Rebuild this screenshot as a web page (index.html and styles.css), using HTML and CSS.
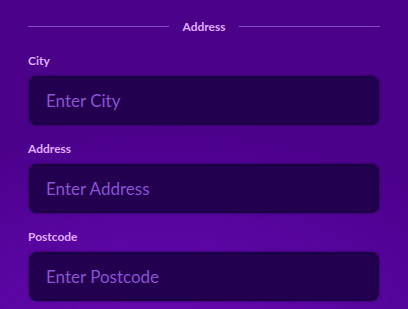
FILE: index.html
```html
<!DOCTYPE html>
<html>
<head>
<meta charset="utf-8">
<link rel="stylesheet" href="styles.css">
</head>
<body>
<div class="form">
  <div class="divider"><span class="line"></span><span class="divider-text">Address</span><span class="line"></span></div>
  <div class="field">
    <label class="label">City</label>
    <div class="input"><span class="placeholder">Enter City</span></div>
  </div>
  <div class="field">
    <label class="label">Address</label>
    <div class="input"><span class="placeholder">Enter Address</span></div>
  </div>
  <div class="field">
    <label class="label">Postcode</label>
    <div class="input"><span class="placeholder">Enter Postcode</span></div>
  </div>
</div>
</body>
</html>
```
FILE: styles.css
```css
html, body {
  margin: 0;
  padding: 0;
  height: 100%;
}
body {
  background: radial-gradient(ellipse 120% 90% at 40% 110%, #6a08b0 0%, #5805a0 40%, #4a0089 80%);
  background-color: #4a0089;
  font-family: Lato, "Open Sans", sans-serif;
  overflow: hidden;
}
.form {
  padding: 18px 28px 0 28px;
  display: flex;
  flex-direction: column;
}
.divider {
  display: flex;
  align-items: center;
  gap: 13px;
  height: 16px;
}
.line {
  flex: 1;
  height: 1px;
  background: #8048c4;
}
.divider-text {
  color: #e0adff;
  font-weight: 700;
  font-size: 12px;
}
.field {
  display: flex;
  flex-direction: column;
  margin-top: 20px;
}
.field + .field {
  margin-top: 17px;
}
.label {
  color: #e0adff;
  font-weight: 700;
  font-size: 12px;
  line-height: 14px;
  margin-bottom: 8px;
}
.input {
  margin-left: 1px;
  width: 350px;
  height: 49px;
  box-sizing: border-box;
  background: #22004f;
  border-radius: 8px;
  border: 2px solid #1c0044;
  box-shadow: 0 0 3px rgba(20, 0, 50, 0.6);
  display: flex;
  align-items: center;
  padding-left: 15px;
}
.placeholder {
  color: #8b52d2;
  font-size: 17px;
}
```
